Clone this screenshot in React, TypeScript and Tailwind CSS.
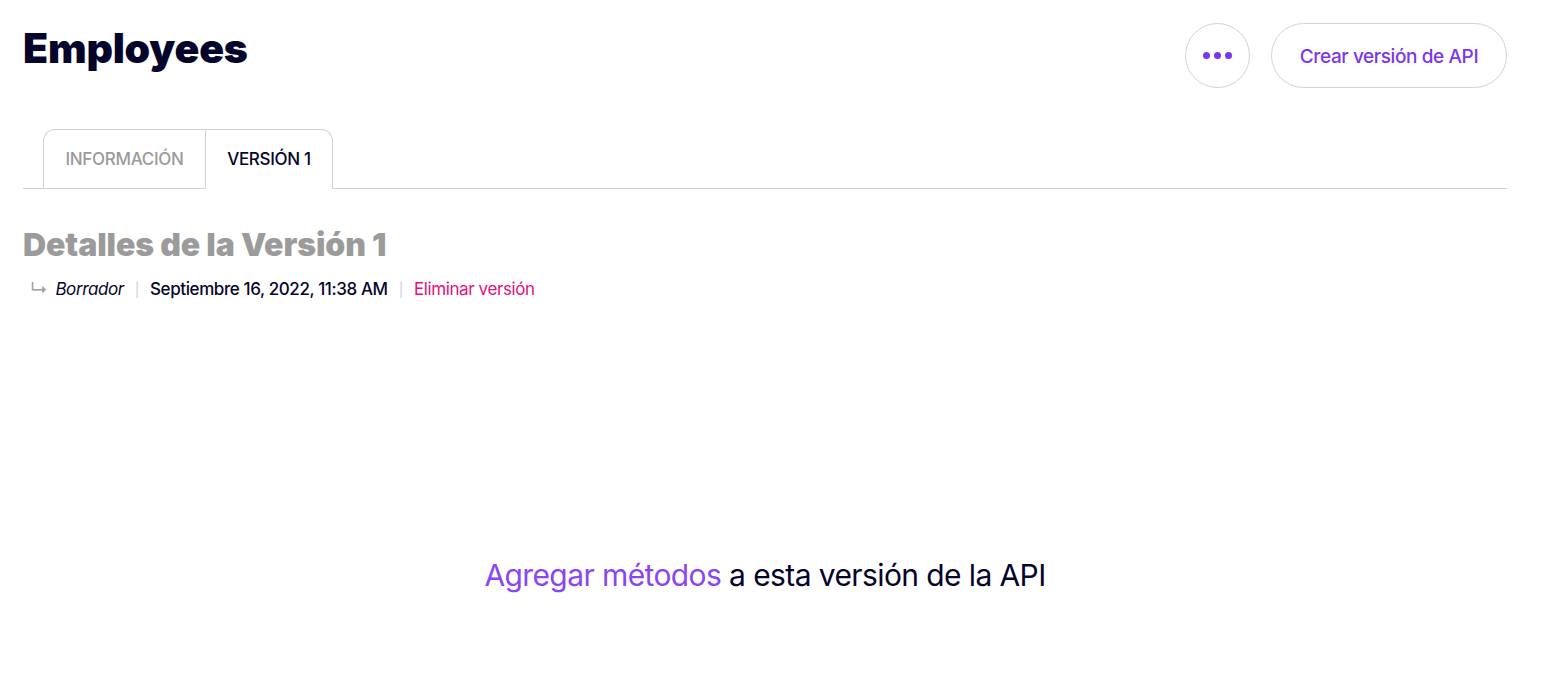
import React from 'react';

const App = () => {
  return (
    <div className="min-h-[682px] bg-white font-['Inter',sans-serif] text-[#0b0b2b]">
      <div className="pl-[23px] pr-[37px] pt-[23px]">
        <div className="flex items-start justify-between">
          <h1 className="mt-[1px] text-[41px] font-black leading-[48px] tracking-[-0.2px] text-[#05042b]">
            Employees
          </h1>
          <div className="flex items-center gap-[21px]">
            <button className="flex h-[65px] w-[65px] items-center justify-center gap-[4px] rounded-full border border-[#d4d4d4] bg-white">
              <span className="h-[7px] w-[7px] rounded-full bg-[#7b35f0]" />
              <span className="h-[7px] w-[7px] rounded-full bg-[#7b35f0]" />
              <span className="h-[7px] w-[7px] rounded-full bg-[#7b35f0]" />
            </button>
            <button className="h-[65px] w-[236px] rounded-full border border-[#d4d4d4] bg-white pt-[4px] text-[19px] font-medium tracking-[-0.4px] text-[#7b35f0]">
              Crear versión de API
            </button>
          </div>
        </div>

        <div className="mt-[41px] flex border-b border-[#d0d0d0] pl-[20px]">
          <div className="-mb-px flex h-[60px] w-[162px] items-center justify-center rounded-tl-[12px] border-t border-l border-b border-[#d0d0d0] pt-[2px] text-[17px] font-medium tracking-[-0.3px] text-[#9a9a9a]">
            INFORMACIÓN
          </div>
          <div className="-mb-px flex h-[60px] w-[128px] items-center justify-center rounded-tr-[12px] border-t border-l border-r border-b border-[#d0d0d0] border-b-white pt-[2px] text-[17px] font-medium tracking-[-0.3px] text-[#05042b]">
            VERSIÓN 1
          </div>
        </div>

        <h2 className="mt-[38px] text-[32px] font-black leading-[36px] tracking-[-0.1px] text-[#9b9b9b]">
          Detalles de la Versión 1
        </h2>
        <div className="mt-[13px] flex items-center pl-[7px] text-[17px] tracking-[-0.4px]">
          <span className="text-[18px] text-[#a0a0a0]">↳</span>
          <span className="ml-[8px] italic text-[#05042b]">Borrador</span>
          <span className="mx-[11px] text-[14px] text-[#cfcfcf]">|</span>
          <span className="font-medium text-[#05042b]">Septiembre 16, 2022, 11:38 AM</span>
          <span className="mx-[11px] text-[14px] text-[#cfcfcf]">|</span>
          <span className="text-[#e4107c]">Eliminar versión</span>
        </div>

        <div className="mt-[250px] text-center text-[30px] tracking-[-0.6px]">
          <span className="text-[#8a45f5]">Agregar métodos</span>{' '}
          <span className="text-[#05042b]">a esta versión de la API</span>
        </div>
      </div>
    </div>
  );
};

export default App;
